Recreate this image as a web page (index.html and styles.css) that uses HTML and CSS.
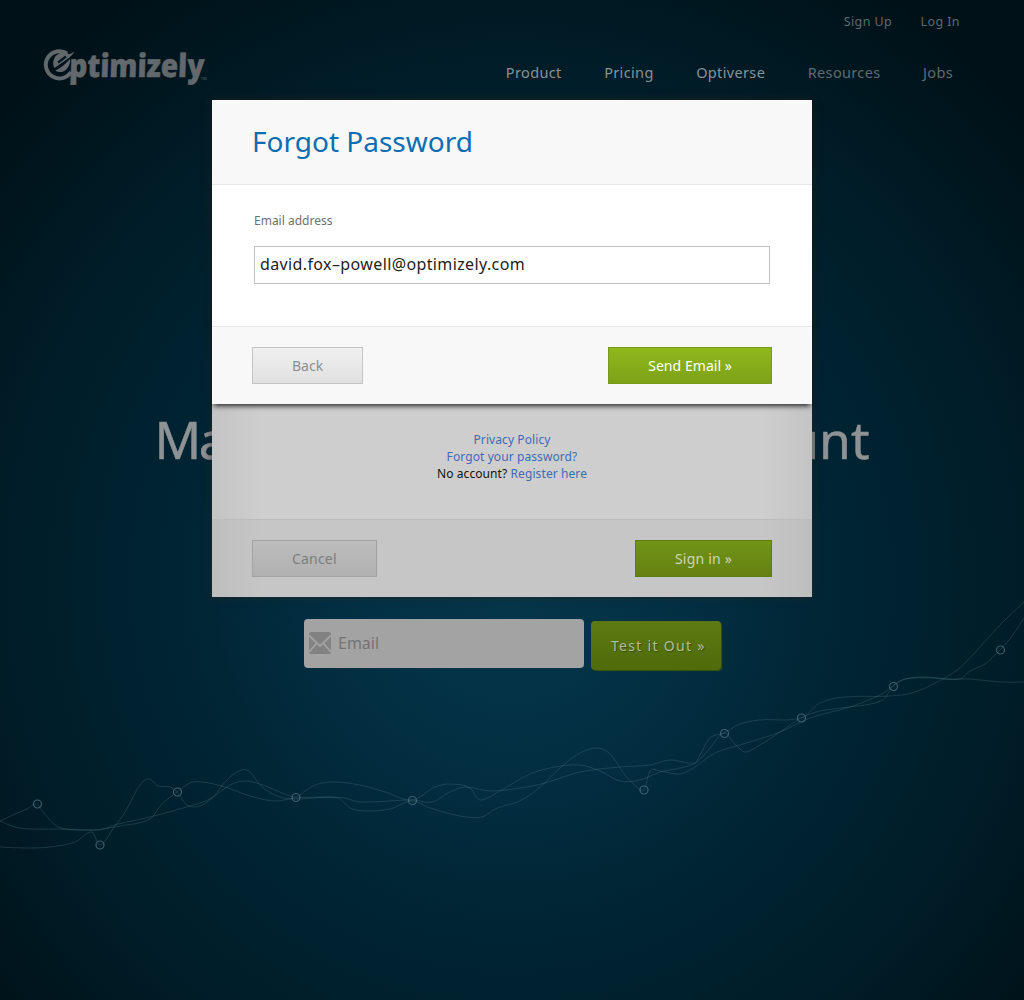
FILE: index.html
```html
<!DOCTYPE html>
<html lang="en">
<head>
<meta charset="utf-8">
<title>Optimizely</title>
<link rel="stylesheet" href="styles.css">
</head>
<body>
<div class="page">
  <svg class="chart" viewBox="0 0 1024 1000" width="1024" height="1000" aria-hidden="true"></svg>
  <header class="header">
    <nav class="account-nav"><a>Sign Up</a><a>Log In</a></nav>
    <div class="header-row">
      <svg class="logo" width="170" height="42" viewBox="0 0 170 42" role="img" aria-label="Optimizely">
        <path d="M26 7.500A13.600 13.600 0 1 0 30 26" fill="none" stroke="currentColor" stroke-width="4"/>
        <path d="M33.500 5.500C32 8 30 10 28.500 11.500L13.500 22C10.500 17 13 10 18 7.500C22 5.500 25 7 28 8C30 8 31.500 6.500 33.500 5.500Z" fill="currentColor"/>
        <path d="M17 16.500L25 10.500" stroke="#001822" stroke-width="2.200"/>
        <path d="M14.500 24.500C20 22 25 17.500 29 13C30 19 25 26 20 26C17.500 26 15.500 25.500 14.500 24.500Z" fill="currentColor"/>
        <text class="logo-word" transform="translate(28 30.500) skewX(-2)" textLength="135" lengthAdjust="spacingAndGlyphs">ptimizely</text>
        <text class="logo-tm" x="160" y="34">TM</text>
      </svg>
      <nav class="main-nav"><a>Product</a><a>Pricing</a><a>Optiverse</a><a class="dim">Resources</a><a class="dim">Jobs</a></nav>
    </div>
  </header>
  <main class="hero">
    <h1 class="headline"><span class="tight">Make</span><span>count</span></h1>
    <form class="trial">
      <div class="trial-field">
        <svg width="22" height="22" viewBox="0 0 22 22" aria-hidden="true"><rect width="22" height="22" rx="2"/><path d="M0 3.500L11 14L22 3.500M0 20L7.500 11.500M22 20L14.500 11.500"/></svg>
        <span>Email</span>
      </div>
      <div class="trial-button">Test it Out »</div>
    </form>
  </main>
</div>
<section class="dialog login">
  <div class="login-body">
    <div class="links"><p><a>Privacy Policy</a></p><p><a>Forgot your password?</a></p><p>No account? <a>Register here</a></p></div>
  </div>
  <footer class="dialog-footer"><div class="button">Cancel</div><div class="button green">Sign in »</div></footer>
</section>
<section class="dialog forgot">
  <header class="dialog-header"><h2>Forgot Password</h2></header>
  <div class="dialog-body"><label>Email address</label><div class="field">david.fox–powell@optimizely.com</div></div>
  <footer class="dialog-footer"><div class="button">Back</div><div class="button green">Send Email »</div></footer>
</section>
<script src="chart.js"></script>
</body>
</html>
```
FILE: styles.css
```css
* { box-sizing: border-box; }
body { margin: 0; position: relative; width: 1024px; height: 1000px; overflow: hidden; font-family: "Noto Sans", "Open Sans", sans-serif; background: #00141d; }
h1, h2, p { margin: 0; font-weight: 400; }
.page { height: 1000px; background: radial-gradient(ellipse 680px 700px at 512px 580px, #05364a 0%, #032f43 26%, #002433 50%, #001c27 76%, #001118 100%); }
.chart { position: absolute; left: 0; top: 0; fill: none; stroke: #4f7583; }
.chart path { stroke-width: 1; opacity: .32; }
.chart circle { stroke-width: 1.2; opacity: .75; }
.header { position: relative; height: 100px; padding: 13px 64px 0 41px; }
.account-nav { display: flex; justify-content: flex-end; gap: 28.5px; font-size: 12.5px; letter-spacing: .4px; line-height: 18px; color: #5e6a70; }
.header-row { display: flex; justify-content: space-between; margin-top: 15px; margin-right: 7px; }
.logo { color: #62686b; overflow: visible; }
.logo-word { font: 800 32px "Open Sans", sans-serif; fill: currentColor; stroke: currentColor; stroke-width: .5; }
.logo-tm { font: 4px "Open Sans", sans-serif; fill: currentColor; }
.main-nav { display: flex; gap: 42.5px; padding-top: 16px; font-size: 14.5px; letter-spacing: .35px; line-height: 20px; color: #86939a; }
.dim { color: #5f6c72; }
.hero { position: relative; padding-top: 300px; }
.headline { display: flex; justify-content: space-between; width: 715px; margin: 0 auto; font-size: 51.5px; line-height: 79px; color: #8e9294; -webkit-text-stroke: .5px #8e9294; }
.tight { letter-spacing: -2.5px; }
.trial { display: flex; gap: 7px; margin: 140px 0 0 304px; }
.trial-field { display: flex; align-items: center; gap: 7px; width: 280px; height: 49px; padding: 0 0 2px 5px; border-radius: 4px; background: #a3a3a3; color: #747474; font-size: 16px; }
.trial-field rect { fill: #828282; }
.trial-field path { fill: none; stroke: #a3a3a3; stroke-width: 1.8; }
.trial-button { width: 130px; height: 49px; margin-top: 2px; padding-left: 20px; border-radius: 4px; background: linear-gradient(#5d7a12, #4f6b0b); color: #b3bd98; font-size: 14px; line-height: 49px; letter-spacing: 1.3px; text-shadow: 1px 1px 1px #384c08; box-shadow: 1px 1px 1px #3c560b; }
.dialog { position: absolute; left: 212px; top: 100px; width: 600px; display: flex; flex-direction: column; }
.dialog-footer { display: flex; justify-content: space-between; height: 78px; padding: 20px 40px 0; border-top: 1px solid #e8e8e8; background: #f8f8f8; }
.button { height: 37px; padding: 0 39px; border: 1px solid #c5c5c5; background: linear-gradient(#f1f1f1, #e0e0e0); color: #8e8e8e; font-size: 14px; line-height: 36px; }
.green { letter-spacing: .05px; border-color: #789a1f; background: linear-gradient(#90b81d, #7da117); color: #fff; }
.login { height: 497px; background: linear-gradient(90deg, #c4c4c4, #cecece 50px, #cecece 550px, #c4c4c4); box-shadow: 0 0 8px rgba(42, 38, 34, .7); }
.login-body { flex: 1; padding-top: 331px; }
.links { text-align: center; font-size: 12px; letter-spacing: .09px; line-height: 17px; color: #111; }
.links a { color: #3f6bb5; }
.login .dialog-footer { border-color: #bcbcbc; background: linear-gradient(90deg, #bebebe, #c6c6c6 50px, #c6c6c6 550px, #bebebe); }
.login .button { letter-spacing: .2px; border-color: #a2a2a2; background: linear-gradient(#bdbdbd, #b0b0b0); color: #7d7d7d; }
.login .green { border-color: #5f7b12; background: linear-gradient(#729417, #648112); color: #cdd6b4; }
.forgot { height: 304px; background: #fff; box-shadow: 0 4px 5px -2px rgba(0, 0, 0, .8); }
.dialog-header { height: 85px; padding: 0 40px; border-bottom: 1px solid #e8e8e8; background: #f8f8f8; }
.dialog-header h2 { font-size: 28px; line-height: 83px; color: #0c6db3; }
.dialog-body { flex: 1; padding: 27px 42px 0; }
.dialog-body label { display: block; font-size: 12px; line-height: 17px; color: #707070; }
.field { height: 38px; margin-top: 17px; padding-left: 5px; border: 1px solid #c2c2c2; font-size: 16px; letter-spacing: .38px; line-height: 35px; color: #222; }
```
FILE: chart.js
```js
const lines = [
  [[0,821],[15,814],[27,809],[37,804],[43,812],[55,825],[65,829],[90,830],[100,830],[118,824],[150,817],[190,806],[210,799],[230,785],[245,781],[260,784],[275,790],[296,797],[305,791],[318,784],[335,782],[360,785],[385,792],[412,800],[435,787],[450,784],[470,788],[478,799],[485,799],[500,791],[530,774],[555,767],[580,765],[600,771],[620,781],[640,780],[660,772],[680,768],[697,762],[710,748],[724,733],[735,744],[745,752],[760,745],[780,732],[801,718],[820,711],[850,707],[875,703],[885,698],[893,686],[905,679],[930,678],[960,679],[970,671],[985,664],[1000,650],[1012,636],[1024,618]],
  [[0,821],[15,827],[30,829],[60,829],[92,830],[120,826],[150,819],[162,804],[177,792],[190,783],[202,782],[225,787],[250,796],[275,801],[296,798],[335,797],[345,798],[360,802],[412,800],[432,802],[450,792],[465,787],[490,791],[520,788],[545,783],[580,772],[620,767],[650,765],[670,760],[695,763],[700,755],[710,738],[724,733],[740,724],[760,720],[801,718],[820,703],[845,697],[890,696],[915,692],[950,675],[965,663],[1000,625],[1024,602]],
  [[0,847],[25,848],[50,847],[75,842],[92,832],[100,845],[115,826],[125,812],[140,785],[149,779],[158,786],[170,787],[177,792],[187,805],[200,806],[212,798],[230,777],[247,770],[262,787],[280,797],[296,799],[338,798],[350,808],[365,811],[390,809],[412,801],[430,808],[460,816],[482,817],[497,808],[520,801],[540,787],[560,768],[580,753],[597,748],[610,754],[625,775],[637,787],[644,790],[650,771],[660,771],[680,774],[695,767],[715,753],[750,742],[780,732],[810,718],[850,707],[880,695],[893,686],[905,679],[925,677],[950,679],[970,679],[1000,682],[1024,682]]
];
const points = [[37.5,804],[100,845],[177.5,792],[296,797.5],[412.5,800.5],[644,790],[724.5,733.5],[801.5,718],[893.5,686.5],[1000.5,650]];
const svg = document.querySelector('.chart');
const add = (tag, attrs) => {
  const el = document.createElementNS('http://www.w3.org/2000/svg', tag);
  for (const k in attrs) el.setAttribute(k, attrs[k]);
  svg.appendChild(el);
};
lines.forEach(p => {
  let d = 'M' + p[0];
  for (let i = 0; i < p.length - 1; i++) {
    const a = p[i - 1] || p[i], b = p[i], c = p[i + 1], e = p[i + 2] || c;
    const t = (c[0] - b[0]) / 3;
    const m = (u, v) => v[0] === u[0] ? 0 : (v[1] - u[1]) / (v[0] - u[0]);
    d += `C${b[0] + t} ${b[1] + m(a, c) * t} ${c[0] - t} ${c[1] - m(b, e) * t} ${c}`;
  }
  add('path', { d });
});
points.forEach(([cx, cy]) => add('circle', { cx, cy, r: 4 }));
```
